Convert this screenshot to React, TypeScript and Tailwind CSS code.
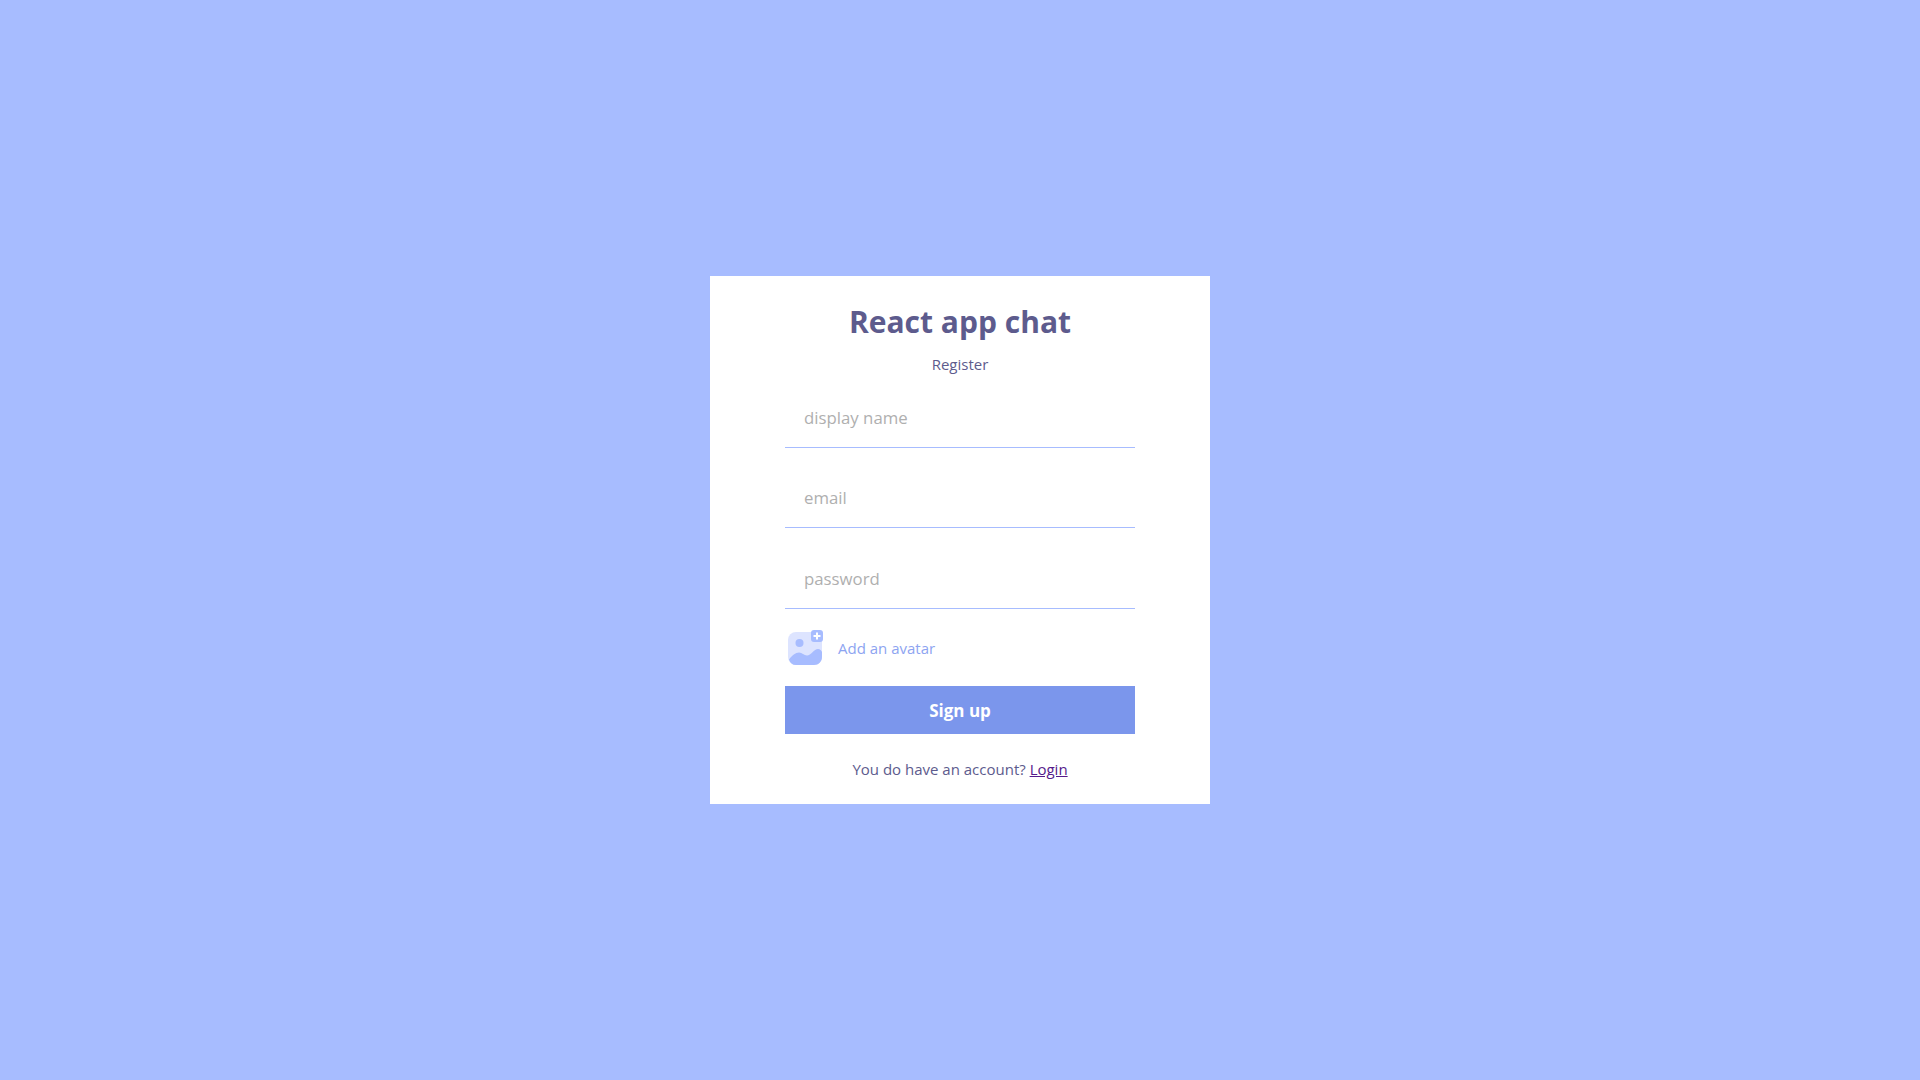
import React from 'react';

const AddAvatarIcon: React.FC = () => (
  <svg width="36" height="36" viewBox="0 0 36 36" className="shrink-0">
    <rect x="1" y="2" width="34" height="33" rx="8" fill="#dde4ff" />
    <circle cx="12.5" cy="13" r="4" fill="#a7bcff" />
    <path
      d="M2 29.500c3-4 6.500-7 10-7 3 0 5 3 8 3 4 0 7-6.500 11-6.500 2 0 3.500 1.500 4 3V27c0 4.500-3.500 8-8 8H9c-3.500 0-6-2-7-5.500z"
      fill="#a7bcff"
    />
    <rect x="24" y="0" width="12" height="12" rx="3" fill="#a7bcff" />
    <path d="M30 2.500v7M26.500 6h7" stroke="#fff" strokeWidth="2" fill="none" />
  </svg>
);

const App: React.FC = () => {
  const fields = [
    { placeholder: 'display name', type: 'text' },
    { placeholder: 'email', type: 'email' },
    { placeholder: 'password', type: 'password' },
  ];

  return (
    <div className="min-h-screen bg-[#a7bcff] flex items-center justify-center font-['Open_Sans',sans-serif]">
      <div className="bg-white w-[500px] px-[75px] pt-[26px] pb-6 flex flex-col items-center">
        <span className="text-[30px] leading-[40px] font-bold text-[#5d5b8d]">React app chat</span>
        <span className="text-[15px] leading-5 mt-3 text-[#5d5b8d]">Register</span>
        <form className="w-full flex flex-col mt-[16.2px]">
          {fields.map((field) => (
            <input
              key={field.placeholder}
              type={field.type}
              placeholder={field.placeholder}
              className="w-full h-[58px] mb-[22.5px] pl-[19px] pr-[19px] pb-0.5 text-[16.8px] outline-none border-b border-[#a7bcff] placeholder:text-[#afafaf]"
            />
          ))}
          <label className="-mt-[3px] flex items-center gap-[15px] pl-[2px] h-10 text-[15px] text-[#8da4f1] cursor-pointer">
            <AddAvatarIcon />
            <span>Add an avatar</span>
          </label>
          <button
            type="button"
            className="mt-[18px] h-12 w-full bg-[#7b96ec] text-white text-[17px] font-bold"
          >
            Sign up
          </button>
        </form>
        <p className="mt-[23.8px] text-[15px] leading-[22px] text-[#5d5b8d]">
          You do have an account? <a href="#" className="underline text-[#551a8b]">Login</a>
        </p>
      </div>
    </div>
  );
};

export default App;
